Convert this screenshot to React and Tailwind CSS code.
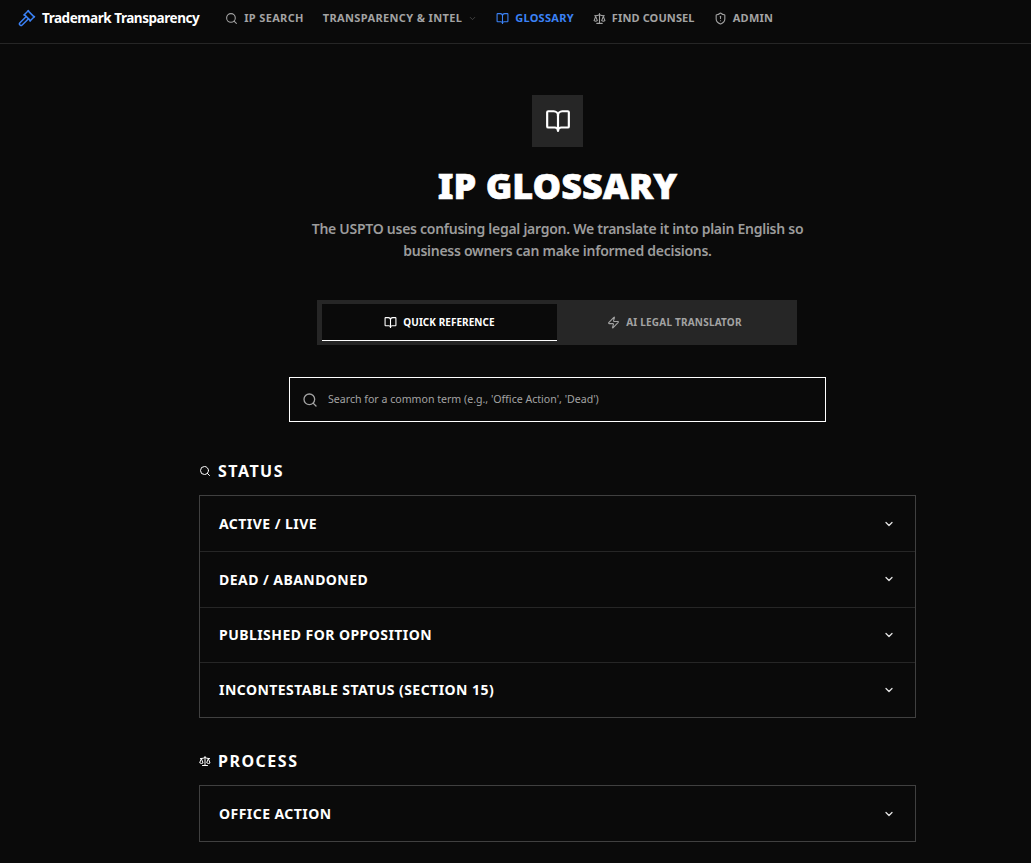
import { BookOpen, ChevronDown, Gavel, Scale, Search, ShieldAlert, Zap } from 'lucide-react';

const navItems = [
  { label: 'IP SEARCH', icon: Search, tracking: 'tracking-[0.34px]' },
  { label: 'TRANSPARENCY & INTEL', chevron: true, tracking: 'tracking-[0.36px]' },
  { label: 'GLOSSARY', icon: BookOpen, active: true, tracking: 'tracking-[0.28px]' },
  { label: 'FIND COUNSEL', icon: Scale, tracking: 'tracking-[0.12px]' },
  { label: 'ADMIN', icon: ShieldAlert, tracking: 'tracking-[0.28px]' },
];

const sections = [
  {
    title: 'STATUS',
    icon: Search,
    terms: ['ACTIVE / LIVE', 'DEAD / ABANDONED', 'PUBLISHED FOR OPPOSITION', 'INCONTESTABLE STATUS (SECTION 15)'],
  },
  { title: 'PROCESS', icon: Scale, terms: ['OFFICE ACTION'] },
];

function Header() {
  return (
    <header className="flex h-[44px] items-center border-b border-[#262626] pb-[7px] pl-[18px]">
      <div className="flex items-center gap-[6px]">
        <Gavel className="h-[18px] w-[18px] text-[#3b82f6]" />
        <span className="text-[13.5px] font-bold tracking-[-0.45px] text-white">Trademark Transparency</span>
      </div>
      <nav className="ml-[26px] flex items-center gap-[19px]">
        {navItems.map(({ label, icon: Icon, chevron, active, tracking }) => (
          <a
            key={label}
            className={`flex items-center gap-[6px] text-[11px] font-bold ${tracking} ${active ? 'text-[#3b82f6]' : 'text-[#a3a3a3]'}`}
          >
            {Icon && <Icon className="h-[13px] w-[13px]" />}
            {label}
            {chevron && <ChevronDown className="h-[9px] w-[9px] text-[#525252]" />}
          </a>
        ))}
      </nav>
    </header>
  );
}

function Hero() {
  return (
    <section className="flex flex-col items-center pt-[51px]">
      <div className="flex h-[52px] w-[51px] items-center justify-center bg-[#262626]">
        <BookOpen className="h-[26px] w-[26px] text-white" />
      </div>
      <h1 className="mt-[17px] text-[36px] leading-[44px] font-black text-white [-webkit-text-stroke:0.6px_white]">IP GLOSSARY</h1>
      <p className="mt-[10px] w-[520px] text-center text-[14px] leading-[22px] font-semibold tracking-[-0.27px] text-[#9c9c9c]">
        The USPTO uses confusing legal jargon. We translate it into plain English so business owners can make informed decisions.
      </p>
    </section>
  );
}

function Tabs() {
  return (
    <div className="mt-[38px] flex justify-center pr-[1px]">
      <div className="flex h-[45px] w-[480px] bg-[#262626] py-[4px] pl-[5px]">
        <button className="flex h-full w-[235px] items-center justify-center gap-[6px] border-b border-white bg-[#0a0a0a] text-[10px] font-bold tracking-[0.05px] text-white">
          <BookOpen className="h-[13px] w-[13px]" />
          QUICK REFERENCE
        </button>
        <button className="flex h-full w-[235px] items-center justify-center gap-[6px] text-[10px] font-bold tracking-[0.2px] text-[#a3a3a3]">
          <Zap className="h-[13px] w-[13px]" />
          AI LEGAL TRANSLATOR
        </button>
      </div>
    </div>
  );
}

function SearchBox() {
  return (
    <div className="mx-auto mt-[32px] flex h-[45px] w-[537px] items-center gap-[10px] border border-white bg-[#0a0a0a] pl-[12px]">
      <Search className="h-[16px] w-[16px] text-[#a3a3a3]" />
      <span className="text-[10.6px] text-[#a3a3a3]">Search for a common term (e.g., 'Office Action', 'Dead')</span>
    </div>
  );
}

function Section({ title, icon: Icon, terms }) {
  return (
    <section>
      <h2 className="flex h-[24px] items-center gap-[7px] text-[16px] font-bold tracking-[1.5px] text-white">
        <Icon className="h-[12px] w-[12px]" />
        {title}
      </h2>
      <div className="mt-[12px] border border-[#404040]">
        {terms.map((term, i) => (
          <div
            key={term}
            className={`flex h-[55.25px] items-center justify-between pr-[20px] pl-[19px] ${i > 0 ? 'border-t border-[#262626]' : ''}`}
          >
            <span className="text-[14px] font-bold tracking-[0.45px] text-white">{term}</span>
            <ChevronDown strokeWidth={2.5} className="h-[12px] w-[12px] text-[#e5e5e5]" />
          </div>
        ))}
      </div>
    </section>
  );
}

export default function App() {
  return (
    <div className="h-[863px] overflow-hidden bg-[#0a0a0a] font-['Noto_Sans',sans-serif]">
      {/* page content is wider than the window, so the centre sits right of the viewport centre */}
      <div className="w-[1115px]">
        <Header />
        <Hero />
        <Tabs />
        <SearchBox />
        <main className="mx-auto mt-[37px] flex w-[717px] flex-col gap-[31px]">
          {sections.map((s) => (
            <Section key={s.title} {...s} />
          ))}
        </main>
      </div>
    </div>
  );
}
